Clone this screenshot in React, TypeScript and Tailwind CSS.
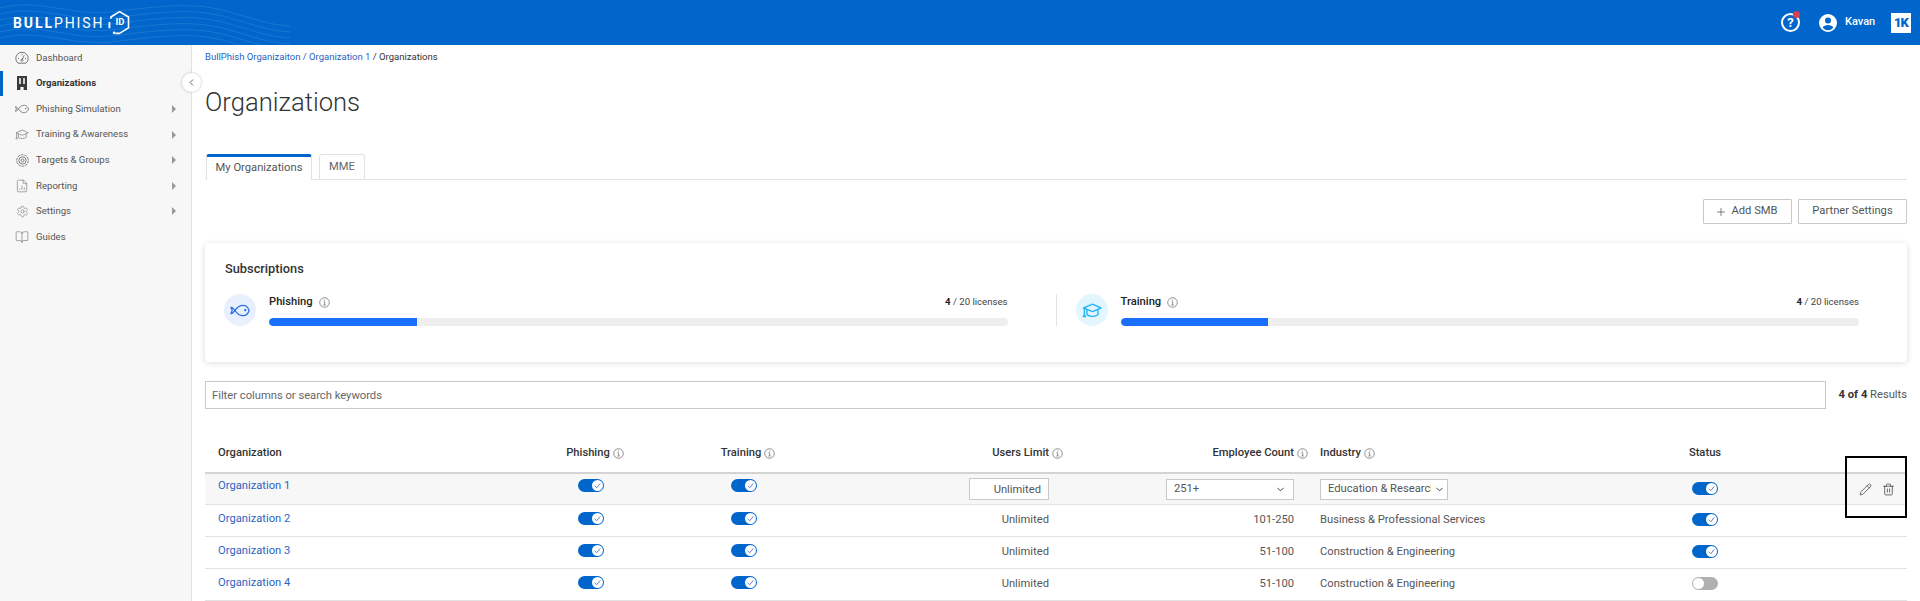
import { BookOpen, ChevronDown, ChevronLeft, FileChartColumn, Pencil, Plus, Settings, Trash2 } from 'lucide-react';
import type { ReactNode } from 'react';

function InfoIcon({ className = '' }: { className?: string }) {
  return (
    <svg viewBox="0 0 12 12" className={`w-[11px] h-[11px] shrink-0 ${className}`} fill="none" stroke="#777" strokeWidth="0.9">
      <circle cx="6" cy="6" r="5.2" />
      <path d="M4.9 5.2H6.2V8.6M4.7 8.7H7.4" />
      <path d="M5.6 3.2h0.9" strokeWidth="1.1" />
    </svg>
  );
}

function FishIcon({ className = '', color = '#777' }: { className?: string; color?: string }) {
  return (
    <svg viewBox="0 0 24 16" className={className} fill="none" stroke={color} strokeWidth="1.5" strokeLinejoin="round">
      <path d="M6 8c2.500-4.400 6.500-6.400 10-6.400 3.200 0 6 2.600 7.300 6.400-1.300 3.800-4.100 6.400-7.300 6.400-3.500 0-7.500-2-10-6.400Z" />
      <path d="M6 8 1.800 4H.8L2.400 8 .8 12h1L6 8Z" />
      <circle cx="18.500" cy="7.500" r="0.700" fill={color} />
    </svg>
  );
}

function OrgIcon() {
  return (
    <svg viewBox="0 0 12 14" className="w-[12px] h-[14px]" fill="#3a3a3a">
      <path d="M1 0h10v14H7.600v-3H4.400v3H1V0Z" />
      <path d="M3.200 2h1.600v6H3.200zM7.200 2h1.600v6H7.200z" fill="#f7f7f7" />
    </svg>
  );
}

function GaugeIcon() {
  return (
    <svg viewBox="0 0 14 14" className="w-[14px] h-[14px]" fill="none" stroke="#777" strokeWidth="1">
      <path d="M3 12.200h8a6.200 6.200 0 1 0-8 0Z" />
      <path d="M7 8.800 9.200 4.400" />
      <circle cx="7" cy="9.200" r="1" />
      <path d="M3 7.500h1M10 7.500h1M7 3.400v1" />
    </svg>
  );
}

function CapIcon({ className = '', color = '#777', width = 1 }: { className?: string; color?: string; width?: number }) {
  return (
    <svg viewBox="0 0 20 15" className={className} fill="none" stroke={color} strokeWidth={width} strokeLinejoin="round">
      <path d="M1.500 5 10.500 1.200 19 5l-8.500 3.600L1.500 5Z" />
      <path d="M5 7v4.600c3 2.300 8.500 2.300 11 0V7" />
      <path d="M2.400 5.400v6.200M1.200 13.500l1.200-2 1.200 2H1.200Z" />
    </svg>
  );
}

function TargetIcon() {
  return (
    <svg viewBox="0 0 14 14" className="w-[13px] h-[13px]" fill="none" stroke="#777" strokeWidth="1">
      <circle cx="7" cy="7" r="6.200" strokeDasharray="3 0.800" />
      <circle cx="7" cy="7" r="3.900" />
      <circle cx="7" cy="7" r="1.600" />
    </svg>
  );
}

function HexLogo() {
  return (
    <svg viewBox="0 0 24 26" className="w-[23px] h-[25px]" fill="none" stroke="#fff" strokeWidth="1.700" strokeLinejoin="round">
      <path d="M3 9V7.200L12 1.600l9.400 5.600v11.400L12 24.400H7.800" />
      <circle cx="6.400" cy="23.800" r="1.400" fill="#fff" stroke="none" />
      <path d="M1.500 12.500v6.500" strokeWidth="2" />
    </svg>
  );
}

function Toggle({ on = true }: { on?: boolean }) {
  return (
    <span className={`relative inline-block w-[26px] h-[13px] rounded-full ${on ? 'bg-[#0066cc]' : 'bg-[#b0b0b0]'}`}>
      <span className={`absolute top-[1px] w-[11px] h-[11px] rounded-full bg-white flex items-center justify-center ${on ? 'right-[1px]' : 'left-[1px]'}`}>
        {on && (
          <svg viewBox="0 0 10 10" className="w-[9px] h-[9px]" fill="none" stroke="#4f74c4" strokeWidth="1">
            <path d="M2 5.200 4.200 7.400 8 2.800" />
          </svg>
        )}
      </span>
    </span>
  );
}

const navItems: { label: string; icon: ReactNode; arrow?: boolean; active?: boolean }[] = [
  { label: 'Dashboard', icon: <GaugeIcon /> },
  { label: 'Organizations', icon: <OrgIcon />, active: true },
  { label: 'Phishing Simulation', icon: <FishIcon className="w-[14px] h-[10px]" />, arrow: true },
  { label: 'Training & Awareness', icon: <CapIcon className="w-[14px] h-[11px]" />, arrow: true },
  { label: 'Targets & Groups', icon: <TargetIcon />, arrow: true },
  { label: 'Reporting', icon: <FileChartColumn size={14} strokeWidth={1.1} color="#777" />, arrow: true },
  { label: 'Settings', icon: <Settings size={13} strokeWidth={1.1} color="#777" />, arrow: true },
  { label: 'Guides', icon: <BookOpen size={14} strokeWidth={1.1} color="#777" /> },
];

const rows = [
  { name: 'Organization 1', employees: '251+', industry: 'Education & Research', status: true, editing: true },
  { name: 'Organization 2', employees: '101-250', industry: 'Business & Professional Services', status: true },
  { name: 'Organization 3', employees: '51-100', industry: 'Construction & Engineering', status: true },
  { name: 'Organization 4', employees: '51-100', industry: 'Construction & Engineering', status: false },
];

const gridCols = 'grid grid-cols-[335px_102px_204px_219px_245px_330px_130px_137px]';

function SubscriptionItem({ label, circle, icon }: { label: string; circle: string; icon: ReactNode }) {
  return (
    <div className="flex-1 flex gap-[13px]">
      <div className={`w-8 h-8 rounded-full flex items-center justify-center shrink-0 ${circle}`}>{icon}</div>
      <div className="flex-1">
        <div className="flex items-center justify-between h-4">
          <div className="flex items-center gap-[6px] text-[11.2px] font-medium text-[#222]">
            {label}
            <InfoIcon />
          </div>
          <div className="text-[9.6px] text-[#444]">
            <span className="font-bold text-[#222]">4</span> / 20 licenses
          </div>
        </div>
        <div className="mt-2 h-2 rounded-full bg-[#eeeeee] overflow-hidden">
          <div className="h-full w-[20%] bg-[#1a6ffa] rounded-l-full" />
        </div>
      </div>
    </div>
  );
}

export default function App() {
  return (
    <div className="w-[1920px] h-[601px] overflow-hidden bg-white font-['Roboto',sans-serif] text-[#333] relative">
      {/* top bar */}
      <header className="h-[45px] bg-[#0066cc] flex items-center justify-between relative overflow-hidden">
        <svg viewBox="0 0 290 45" className="absolute left-0 top-0 w-[290px] h-[45px]" fill="none" stroke="#ffffff" strokeOpacity="0.1" strokeWidth="1">
          <path d="M0 8c40-10 70 8 110 4s80-12 120 0 40 12 60 14" />
          <path d="M0 14c40-10 70 8 110 4s80-12 120 0 40 12 60 14" />
          <path d="M0 20c40-10 70 8 110 4s80-12 120 0 40 12 60 14" />
          <path d="M0 26c40-10 70 8 110 4s80-12 120 0 40 12 60 14" />
          <path d="M0 32c40-10 70 8 110 4s80-12 120 0 40 12 60 14" />
          <path d="M0 38c40-10 70 8 110 4s80-12 120 0 40 12 60 14" />
        </svg>
        <div className="relative flex items-center pl-[13px] text-white">
          <span className="text-[14px] tracking-[1.9px] leading-none">
            <span className="font-bold">BULL</span>PHISH
          </span>
          <span className="relative ml-[4px] flex items-center justify-center">
            <HexLogo />
            <span className="absolute inset-0 flex items-center justify-center text-[9.5px] font-bold">ID</span>
          </span>
        </div>
        <div className="relative flex items-center text-white pr-[9px]">
          <span className="relative w-[19px] h-[19px] rounded-full border-2 border-white flex items-center justify-center text-[13px] font-bold leading-none">
            ?
            <span className="absolute -top-[4px] -right-[2px] w-[7px] h-[7px] rounded-full bg-[#d6404f]" />
          </span>
          <svg viewBox="0 0 18 18" className="w-[18px] h-[18px] ml-[19px]" fill="#fff">
            <path fillRule="evenodd" d="M9 0a9 9 0 1 1 0 18A9 9 0 0 1 9 0Zm0 3.600a3 3 0 1 0 0 6 3 3 0 0 0 0-6ZM3.600 13.600c1.100 1.600 3.100 2.600 5.400 2.600s4.300-1 5.400-2.600c-.9-1.600-3-2.600-5.400-2.600s-4.500 1-5.400 2.600Z" />
          </svg>
          <span className="ml-[8px] text-[11px] font-medium w-[30px]">Kavan</span>
          <span className="ml-[16px] w-5 h-5 bg-white text-[#0066cc] flex items-center justify-center text-[13px] font-black tracking-[-1px] leading-none">1K</span>
        </div>
      </header>

      <div className="flex h-[556px]">
        {/* sidebar */}
        <aside className="relative w-[192px] shrink-0 bg-[#f7f7f7] border-r border-[#e2e2e2]">
          {navItems.map((item) => (
            <div
              key={item.label}
              className={`relative h-[25.6px] flex items-center pl-[15px] pr-[15px] text-[9.6px] ${item.active ? 'font-bold text-[#333]' : 'text-[#555]'}`}
            >
              {item.active && <span className="absolute left-0 top-0 bottom-0 w-[3px] bg-[#0066cc]" />}
              <span className="w-[14px] flex justify-center">{item.icon}</span>
              <span className="ml-[7px] flex-1">{item.label}</span>
              {item.arrow && <span className="w-0 h-0 border-y-[4px] border-y-transparent border-l-[4px] border-l-[#999]" />}
            </div>
          ))}
          <button className="absolute -right-[10px] top-[28px] w-[19px] h-[19px] rounded-full bg-white shadow-[0_0_3px_rgba(0,0,0,0.25)] flex items-center justify-center text-[#555]">
            <ChevronLeft size={11} />
          </button>
        </aside>

        {/* main */}
        <main className="flex-1 px-[13px] pt-[5px]">
          <div className="text-[9.5px] leading-[14px] text-[#333]">
            <span className="text-[#1f5fbf]">BullPhish Organizaiton / Organization 1</span> / Organizations
          </div>
          <h1 className="mt-[20px] text-[25.6px] leading-[36px] font-light text-[#333]">Organizations</h1>

          <div className="mt-[34px] flex items-end gap-[7px] border-b border-[#e2e2e2] h-[26px] pl-[1px]">
            <div className="w-[106px] h-[26px] -mb-[1px] bg-white border-x border-[#e2e2e2] border-t-[3px] border-t-[#0066cc] rounded-t-[3px] flex items-center justify-center text-[11.2px] text-[#555] pb-[1px]">
              My Organizations
            </div>
            <div className="w-[46px] h-[25px] border-x border-t border-[#e2e2e2] rounded-t-[3px] flex items-center justify-center text-[11.2px] text-[#666]">
              MME
            </div>
          </div>

          <div className="mt-[19px] flex justify-end gap-[6px]">
            <button className="w-[89px] h-[25px] border border-[#c8c8c8] rounded-[1px] flex items-center justify-center gap-[4px] pr-[2px] text-[11.2px] text-[#555]">
              <Plus size={12} strokeWidth={1.5} />
              Add SMB
            </button>
            <button className="w-[109px] h-[25px] border border-[#c8c8c8] rounded-[1px] text-[11.2px] text-[#555]">Partner Settings</button>
          </div>

          <section className="mt-[19px] h-[119px] rounded-[4px] bg-white shadow-[0_1px_6px_rgba(0,0,0,0.14)] pl-[19px] pr-[48px] pt-[17px]">
            <h2 className="pl-[1px] text-[12.8px] leading-[18px] font-medium text-[#333]">Subscriptions</h2>
            <div className="mt-[16px] flex">
              <SubscriptionItem label="Phishing" circle="bg-[#e8f0fe]" icon={<FishIcon className="w-[20px] h-[13px]" color="#2f6fe8" />} />
              <div className="w-px h-8 bg-[#e2e2e2] ml-[48px] mr-[19px]" />
              <SubscriptionItem label="Training" circle="bg-[#e3f6fd]" icon={<CapIcon className="w-[20px] h-[15px]" color="#29b6f6" width={1.4} />} />
            </div>
          </section>

          <div className="mt-[19px] flex items-center">
            <input
              placeholder="Filter columns or search keywords"
              className="w-[1621px] h-[28px] border border-[#c8c8c8] px-[6px] text-[11.2px] outline-none placeholder:text-[#666]"
            />
            <div className="flex-1 text-right text-[11.2px] text-[#555]">
              <span className="font-bold text-[#333]">4 of 4</span> Results
            </div>
          </div>

          <div className="mt-[24px]">
            <div className={`${gridCols} h-[41px] pt-[2px] items-center border-b-2 border-[#d4d4d4] text-[11.2px] font-medium text-[#333]`}>
              <div className="pl-[13px]">Organization</div>
              <div className="flex items-center justify-center gap-[3px] pl-2">Phishing <InfoIcon /></div>
              <div className="flex items-center justify-center gap-[3px] pl-2">Training <InfoIcon /></div>
              <div className="flex items-center justify-end gap-[3px] pr-[2px]">Users Limit <InfoIcon /></div>
              <div className="flex items-center justify-end gap-[3px] pr-[2px]">Employee Count <InfoIcon /></div>
              <div className="flex items-center gap-[3px] pl-[10px]">Industry <InfoIcon /></div>
              <div className="text-center">Status</div>
              <div />
            </div>
            {rows.map((row) => (
              <div
                key={row.name}
                className={`${gridCols} border-b border-[#e2e2e2] text-[11.2px] text-[#555] ${row.editing ? 'h-[31px] bg-[#f7f7f7]' : 'h-[32px]'} items-center`}
              >
                <div className={`pl-[13px] text-[#2f63c4] ${row.editing ? 'self-start pt-[4px]' : '-mt-[2px]'}`}>{row.name}</div>
                <div className={`flex justify-center ${row.editing ? 'self-start pt-[5px]' : '-mt-[5px]'}`}><Toggle /></div>
                <div className={`flex justify-center ${row.editing ? 'self-start pt-[5px]' : '-mt-[5px]'}`}><Toggle /></div>
                <div className="flex justify-end pr-4">
                  {row.editing ? (
                    <input readOnly value="Unlimited" className="w-[80px] h-[22px] bg-white border border-[#c8c8c8] text-right pr-[7px] text-[11.2px] text-[#555] outline-none" />
                  ) : (
                    <span>Unlimited</span>
                  )}
                </div>
                <div className="flex justify-end pr-4">
                  {row.editing ? (
                    <div className="w-[128px] h-[21px] bg-white border border-[#c8c8c8] flex items-center justify-between pl-[7px] pr-[7px]">
                      {row.employees}
                      <ChevronDown size={11} className="text-[#333]" />
                    </div>
                  ) : (
                    <span>{row.employees}</span>
                  )}
                </div>
                <div className="pl-[10px]">
                  {row.editing ? (
                    <div className="w-[128px] h-[21px] bg-white border border-[#c8c8c8] flex items-center pl-[7px] gap-[3px]">
                      <span className="w-[103px] overflow-hidden whitespace-nowrap">{row.industry}</span>
                      <ChevronDown size={11} className="shrink-0 text-[#333]" />
                    </div>
                  ) : (
                    <span className="block">{row.industry}</span>
                  )}
                </div>
                <div className={`flex justify-center ${row.editing ? '-mt-[1px]' : '-mt-[3px]'}`}><Toggle on={row.status} /></div>
                <div className="flex items-center justify-end gap-[10px] pr-[12px] text-[#333]">
                  {row.editing && (
                    <>
                      <Pencil size={13} strokeWidth={1.3} />
                      <Trash2 size={13} strokeWidth={1.3} />
                    </>
                  )}
                </div>
              </div>
            ))}
          </div>
        </main>
      </div>

      {/* annotation box over the row actions */}
      <div className="absolute left-[1845px] top-[456px] w-[62px] h-[62px] border-2 border-black pointer-events-none" />
    </div>
  );
}
